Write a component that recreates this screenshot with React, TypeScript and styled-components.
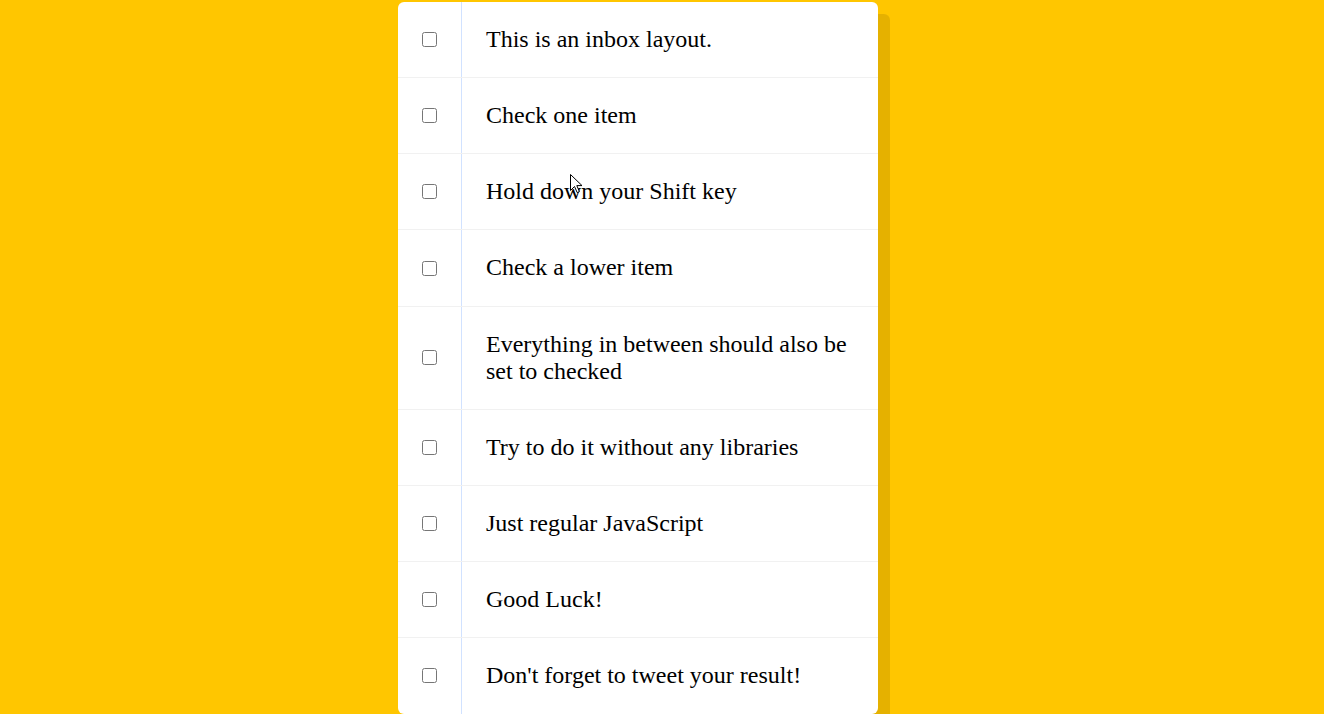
import React from "react";
import styled, { createGlobalStyle } from "styled-components";

const GlobalStyle = createGlobalStyle`
  html, body {
    margin: 0;
    padding: 0;
    background: #ffc600;
    font-family: "Liberation Serif", "Times New Roman", serif;
  }
`;

const Page = styled.div`
  position: relative;
  padding: 2px 0 0 398px;
  min-height: 712px;
`;

const Inbox = styled.div`
  width: 480px;
  background: #ffffff;
  border-radius: 6px;
  box-shadow: 12px 12px 0 rgba(0, 0, 0, 0.1);
`;

const Item = styled.label`
  display: flex;
  align-items: center;
  border-bottom: 1px solid #f1f1f1;
  &:last-child {
    border-bottom: 0;
  }
`;

const Check = styled.input`
  width: 15px;
  height: 15px;
  margin: 24px;
  flex: none;
`;

const Text = styled.p`
  margin: 0;
  padding: 24px;
  flex: 1;
  font-family: "Liberation Serif", "Times New Roman", serif;
  font-size: 24px;
  line-height: 27.15px;
  font-weight: 400;
  color: #000;
  border-left: 1px solid #d1e2ff;
  input:checked + & {
    background: #f9f9f9;
    text-decoration: line-through;
  }
`;

const Cursor = styled.svg`
  position: absolute;
  left: 570px;
  top: 174px;
  width: 13px;
  height: 20px;
  pointer-events: none;
`;

const items = [
  "This is an inbox layout.",
  "Check one item",
  "Hold down your Shift key",
  "Check a lower item",
  "Everything in between should also be set to checked",
  "Try to do it without any libraries",
  "Just regular JavaScript",
  "Good Luck!",
  "Don't forget to tweet your result!",
];

export default function App() {
  return (
    <>
      <GlobalStyle />
      <Page>
        <Inbox>
          {items.map((t) => (
            <Item key={t}>
              <Check type="checkbox" />
              <Text>{t}</Text>
            </Item>
          ))}
        </Inbox>
        <Cursor viewBox="0 0 13 20">
          <path
            d="M0.5 0.5 L0.5 16.5 L4.5 12.5 L7.2 18.6 L9.4 17.6 L6.8 11.6 L12 11.6 Z"
            fill="#fff"
            stroke="#000"
            strokeWidth="1"
            strokeLinejoin="miter"
          />
        </Cursor>
      </Page>
    </>
  );
}
